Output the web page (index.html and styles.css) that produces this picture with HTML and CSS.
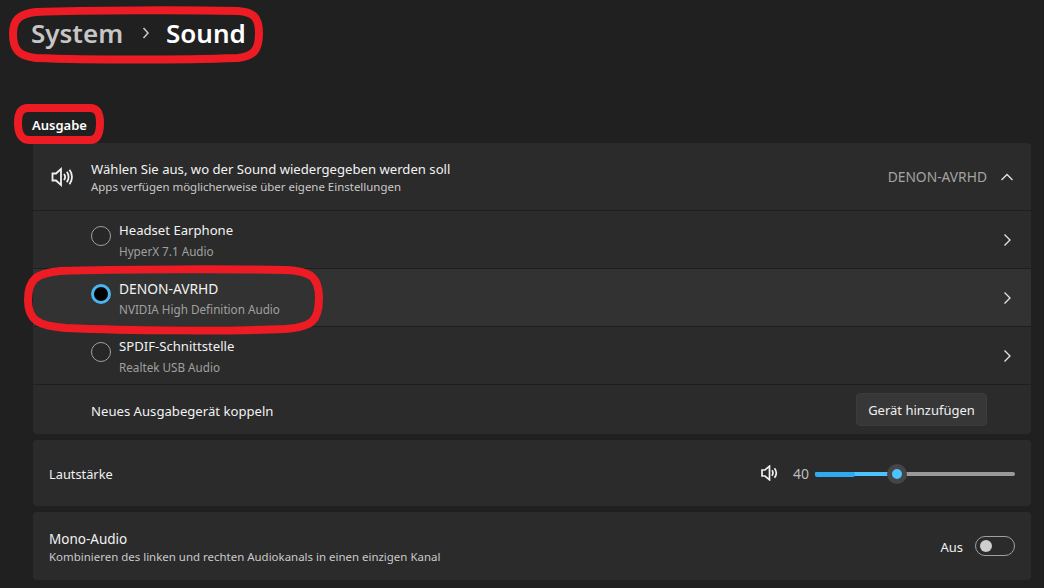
FILE: index.html
```html
<!DOCTYPE html>
<html lang="de">
<head>
<meta charset="utf-8">
<title>System &gt; Sound</title>
<link rel="stylesheet" href="styles.css">
</head>
<body>
<div class="page">
  <header class="crumbs">
    <span class="crumb-parent">System</span>
    <svg class="crumb-sep" width="10" height="14" viewBox="0 0 10 14"><path d="M2.500 2 7 7l-4.500 5" fill="none" stroke="#c4c4c4" stroke-width="1.600"/></svg>
    <span class="crumb-current">Sound</span>
  </header>
  <h2 class="section-title">Ausgabe</h2>
  <section class="card">
    <div class="row row-head">
      <svg class="speaker" width="22" height="20" viewBox="0 0 22 20"><path d="M1.500 6.500h3.500l5-4.500v16l-5-4.500H1.500z M13 7c1.300 1.700 1.300 4.300 0 6 M15.800 4.800c2.400 3 2.400 7.400 0 10.400 M18.500 2.800c3.300 4.300 3.300 10.100 0 14.400" fill="none" stroke="#f0f0f0" stroke-width="1.800"/></svg>
      <div class="text-stack">
        <div class="title title-long">Wählen Sie aus, wo der Sound wiedergegeben werden soll</div>
        <div class="sub">Apps verfügen möglicherweise über eigene Einstellungen</div>
      </div>
      <span class="value">DENON-AVRHD</span>
      <svg class="chev" width="14" height="14" viewBox="0 0 14 14"><path d="M1.500 10 7 4.500 12.500 10" fill="none" stroke="#e6e6e6" stroke-width="1.300"/></svg>
    </div>
    <div class="row row-device">
      <span class="radio"></span>
      <div class="device-text"><div class="title title-long">Headset Earphone</div><div class="device-sub">HyperX 7.1 Audio</div></div>
      <svg class="chev" width="14" height="14" viewBox="0 0 14 14"><path d="M4.500 1.500 10 7l-5.500 5.500" fill="none" stroke="#e6e6e6" stroke-width="1.300"/></svg>
    </div>
    <div class="row row-device row-active">
      <span class="radio radio-on"></span>
      <div class="device-text"><div class="title title-caps">DENON-AVRHD</div><div class="device-sub">NVIDIA High Definition Audio</div></div>
      <svg class="chev" width="14" height="14" viewBox="0 0 14 14"><path d="M4.500 1.500 10 7l-5.500 5.500" fill="none" stroke="#e6e6e6" stroke-width="1.300"/></svg>
    </div>
    <div class="row row-device">
      <span class="radio"></span>
      <div class="device-text"><div class="title title-long">SPDIF-Schnittstelle</div><div class="device-sub">Realtek USB Audio</div></div>
      <svg class="chev" width="14" height="14" viewBox="0 0 14 14"><path d="M4.500 1.500 10 7l-5.500 5.500" fill="none" stroke="#e6e6e6" stroke-width="1.300"/></svg>
    </div>
    <div class="row row-pair">
      <div class="title title-long pair-label">Neues Ausgabegerät koppeln</div>
      <button class="btn">Gerät hinzufügen</button>
    </div>
  </section>
  <section class="card card-volume">
    <div class="title title-vol grow">Lautstärke</div>
    <svg class="vol-icon" width="18" height="16" viewBox="0 0 18 16"><path d="M1 5h3l4.500-3.800v13.600L4 11H1z M11 5.300c1.200 1.700 1.200 3.700 0 5.400 M13.500 3.200c2.200 2.900 2.200 6.700 0 9.600" fill="none" stroke="#f0f0f0" stroke-width="1.700"/></svg>
    <span class="vol-num">40</span>
    <div class="slider">
      <div class="slider-fill"></div>
      <div class="slider-peak"></div>
      <div class="slider-thumb"></div>
    </div>
  </section>
  <section class="card card-mono">
    <div class="text-stack mono-text">
      <div class="title">Mono-Audio</div>
      <div class="sub">Kombinieren des linken und rechten Audiokanals in einen einzigen Kanal</div>
    </div>
    <span class="toggle-label">Aus</span>
    <span class="toggle"><span class="knob"></span></span>
  </section>
</div>
<svg class="marks" width="1044" height="588" viewBox="0 0 1044 588">
  <path d="M36 12C90 10 190 10 238 11C254 12 259 18 259 33C259 50 254 56 238 58C180 60 90 60 36 58C19 56 13 50 13 34C13 20 19 14 36 12Z"/>
  <path d="M28 108H90C97 108 100 112 100 123C100 134 97 140 90 140H29C22 140 18 134 18 123C18 113 21 108 28 108Z"/>
  <path d="M60 271C120 269 240 269 285 270C311 271 319 277 319 298C319 321 312 327 285 329C240 331 130 331 66 328C38 326 28 320 28 300C28 280 36 273 60 271Z"/>
</svg>
</body>
</html>
```
FILE: styles.css
```css
* { box-sizing: border-box; }
html, body { margin: 0; padding: 0; }
body {
  width: 1044px;
  height: 588px;
  overflow: hidden;
  background: #202020;
  color: #f2f2f2;
  font-family: "Noto Sans", "Open Sans", sans-serif;
  position: relative;
}
.page { padding: 0 13px 0 33px; }
.crumbs {
  height: 68px;
  margin-left: -2px;
  display: flex;
  align-items: center;
  font-size: 26px;
  font-weight: 600;
  padding-bottom: 2px;
}
.crumb-parent { color: #c6c6c6; width: 110px; }
.crumb-current { color: #fff; margin-left: 15px; }
.section-title {
  margin: 0 0 0 -1px;
  height: 75px;
  padding-top: 47px;
  font-size: 13px;
  line-height: 20px;
  font-weight: 600;
  color: #fff;
}
.card {
  background: #2b2b2b;
  border-radius: 4px;
  margin-bottom: 6px;
}
.row {
  display: flex;
  align-items: center;
  border-bottom: 1px solid #1e1e1e;
  padding-right: 17px;
}
.row:last-child { border-bottom: 0; }
.row-head { height: 68px; padding-left: 18px; }
.speaker { margin-right: 18px; flex: none; }
.text-stack { flex: 1; }
.title { font-size: 13.5px; line-height: 19px; color: #f2f2f2; }
.title-long { font-size: 13.14px; }
.title-caps { font-size: 13.8px; }
.title-vol { font-size: 12.8px; padding-top: 2px; }
.sub { font-size: 11.46px; line-height: 15px; color: #c9c9c9; }
.value { font-size: 13.8px; color: #a4a4a4; margin-right: 13px; }
.row-device { height: 58px; padding-left: 58px; }
.row-active { background: #323232; }
.radio {
  width: 20px;
  height: 20px;
  border-radius: 50%;
  border: 1px solid #a0a0a0;
  background: #272727;
  flex: none;
  margin: 0 8px 7px 0;
}
.radio-on { border: 3.5px solid #4cb4f0; background: #000; }
.device-text { flex: 1; }
.device-text .title { margin-bottom: 4px; }
.device-sub { font-size: 11.7px; line-height: 15px; color: #a0a0a0; }
.row-pair { height: 49px; padding-left: 58px; padding-right: 44px; justify-content: space-between; }
.pair-label { padding-top: 3px; }
.btn {
  font: inherit;
  font-size: 13px;
  width: 131px;
  height: 33px;
  padding: 0;
  background: #373737;
  border: 1px solid #3c3c3c;
  border-radius: 4px;
  color: #efefef;
}
.card-volume {
  height: 66px;
  display: flex;
  align-items: center;
  padding: 0 16px;
}
.grow { flex: 1; }
.vol-icon { margin-right: 14px; }
.vol-num { font-size: 14px; color: #bdbdbd; width: 22px; }
.slider {
  position: relative;
  width: 200px;
  height: 4px;
  margin-top: 2px;
  background: #9a9a9a;
  border-radius: 2px;
}
.slider-fill { position: absolute; left: 0; top: 0; width: 82px; height: 4px; background: #4cc2ff; border-radius: 2px; }
.slider-peak { position: absolute; left: 0; top: 0; width: 40px; height: 5px; background: #2fa9f0; border-radius: 2px; }
.slider-thumb {
  position: absolute;
  left: 72px;
  top: -8px;
  width: 20px;
  height: 20px;
  border-radius: 50%;
  border: 5px solid #454545;
  background: #4cc2ff;
}
.card-mono {
  height: 68px;
  display: flex;
  align-items: center;
  padding: 0 16px;
  margin-bottom: 0;
}
.mono-text { padding-top: 2px; }
.toggle-label { font-size: 13px; color: #f0f0f0; margin: 2px 12px 0 0; }
.toggle {
  width: 40px;
  height: 20px;
  border: 1px solid #a0a0a0;
  border-radius: 10px;
  padding: 3px 0 0 4px;
  display: block;
}
.knob { display: block; width: 12px; height: 12px; border-radius: 50%; background: #cecece; }
.marks { position: absolute; left: 0; top: 0; pointer-events: none; }
.marks path { fill: none; stroke: #ed1c24; stroke-width: 8; }
```
